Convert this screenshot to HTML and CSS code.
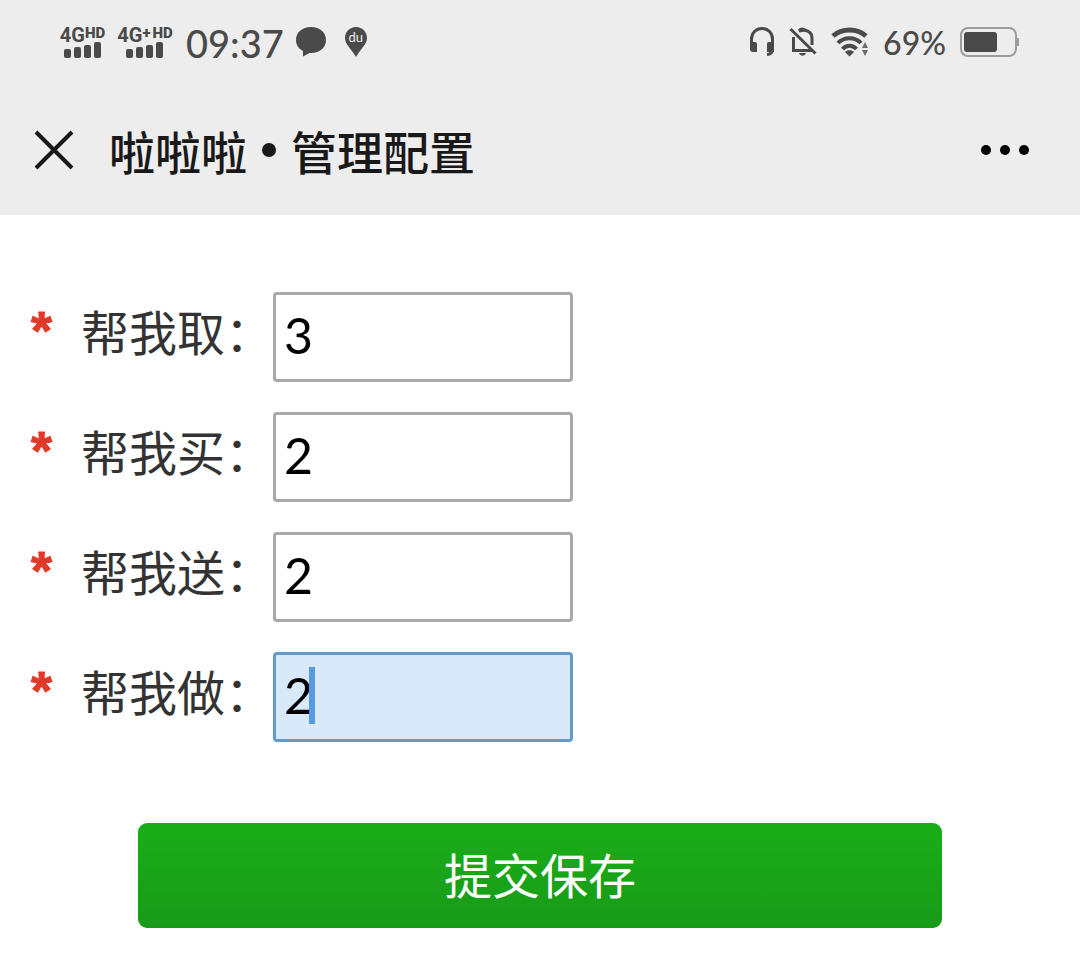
FILE: index.html
```
<!DOCTYPE html>
<html lang="zh-CN">
<head>
  <meta charset="UTF-8">
  <meta name="viewport" content="width=device-width, initial-scale=1.0">
  <title>啦啦啦 • 管理配置</title>
  <link rel="stylesheet" href="styles.css">
</head>
<body>

<header>
  <div class="status-bar">
    <div class="status-left">
      <div class="signal">
        <div class="network">4G<small>HD</small></div>
        <svg width="38" height="16" viewBox="0 0 38 16" fill="#4a4a4a">
          <rect x="0" y="7" width="7" height="9" rx="2"/>
          <rect x="10" y="5" width="7" height="11" rx="2"/>
          <rect x="20" y="3" width="7" height="13" rx="2"/>
          <rect x="30" y="0" width="7" height="16" rx="2"/>
        </svg>
      </div>
      <div class="signal">
        <div class="network">4G<small>+</small><small class="hd">HD</small></div>
        <svg width="38" height="16" viewBox="0 0 38 16" fill="#4a4a4a">
          <rect x="0" y="7" width="7" height="9" rx="2"/>
          <rect x="10" y="5" width="7" height="11" rx="2"/>
          <rect x="20" y="3" width="7" height="13" rx="2"/>
          <rect x="30" y="0" width="7" height="16" rx="2"/>
        </svg>
      </div>
      <div class="clock">09:37</div>
      <svg class="chat-icon" width="32" height="30" viewBox="0 0 32 30" fill="#4a4a4a">
        <path d="M16 0C7 0 1 5.500 1 13C1 18 3.500 21.500 8 24V29.500L14.500 26H16C25 26 31 20.500 31 13S25 0 16 0Z"/>
      </svg>
      <div class="pin">
        <svg width="24" height="32" viewBox="0 0 24 32" fill="#4a4a4a">
          <path d="M12 1C5.500 1 1 6 1 12C1 18 6 21 12 31C18 21 23 18 23 12C23 6 18.500 1 12 1Z"/>
        </svg>
        <span>du</span>
      </div>
    </div>
    <div class="status-right">
      <svg width="26" height="32" viewBox="0 0 26 32" fill="none" stroke="#4a4a4a" stroke-width="3">
        <path d="M2.500 18V13C2.500 7 7 2.500 13 2.500S23.500 7 23.500 13V22C23.500 26 22 28.500 18 28.500"/>
        <path d="M1 16H6Q8 16 8 18V26H4Q1 26 1 23ZM25 16H20Q18 16 18 18V26H25Z" fill="#4a4a4a" stroke="none"/>
      </svg>
      <svg class="bell-icon" width="28" height="32" viewBox="0 0 28 32" fill="none" stroke="#4a4a4a" stroke-width="3">
        <path d="M4.500 11V24.500H23M10 5.500C16 2 23 6 23 12V19"/>
        <path d="M1.500 3L26.500 27.500"/>
        <path d="M9 4C10 .5 16 .5 17 4ZM10 27H17C16 30.500 11 30.500 10 27Z" fill="#4a4a4a" stroke="none"/>
      </svg>
      <svg class="wifi-icon" width="38" height="30" viewBox="0 0 38 30" fill="none" stroke="#4a4a4a" stroke-width="5">
        <path d="M2 9C11 1 26 1 35 9"/>
        <path d="M7 16C13 9.500 24 9.500 30 16" stroke-width="4"/>
        <path d="M11.500 22C15.500 17.500 21.500 17.500 25.500 22" stroke-width="4"/>
        <path d="M14 25C16 22.500 21 22.500 23 25L18.500 29.500Z" fill="#4a4a4a" stroke="none"/>
        <path d="M34 15L37 21H31ZM34 29L37 23H31Z" fill="#6a6a6a" stroke="none"/>
      </svg>
      <div class="battery-level">69%</div>
      <svg class="battery-icon" width="60" height="30" viewBox="0 0 60 30">
        <rect x="1" y="1" width="55" height="28" rx="7" fill="none" stroke="#9c9c9c" stroke-width="2"/>
        <rect x="4" y="5" width="33" height="20" rx="3" fill="#4a4a4a"/>
        <path d="M58 11V19" stroke="#9c9c9c" stroke-width="2"/>
      </svg>
    </div>
  </div>

  <div class="nav-bar">
    <button type="button" class="icon-button" aria-label="关闭">
      <svg width="40" height="40" viewBox="0 0 40 40" stroke="#191919" stroke-width="4">
        <path d="M2 2L38 38M38 2L2 38"/>
      </svg>
    </button>
    <h1>啦啦啦 <span class="dot"></span> 管理配置</h1>
    <button type="button" class="icon-button" aria-label="更多">
      <svg width="50" height="12" viewBox="0 0 50 12" fill="#000">
        <circle cx="6" cy="6" r="5"/>
        <circle cx="25" cy="6" r="5"/>
        <circle cx="44" cy="6" r="5"/>
      </svg>
    </button>
  </div>
</header>

<form>
  <div class="row">
    <span class="required">*</span>
    <label for="fetch">帮我取：</label>
    <div class="field"><input type="text" id="fetch" value="3"></div>
  </div>
  <div class="row">
    <span class="required">*</span>
    <label for="buy">帮我买：</label>
    <div class="field"><input type="text" id="buy" value="2"></div>
  </div>
  <div class="row">
    <span class="required">*</span>
    <label for="send">帮我送：</label>
    <div class="field"><input type="text" id="send" value="2"></div>
  </div>
  <div class="row">
    <span class="required">*</span>
    <label for="do">帮我做：</label>
    <div class="field active"><input type="text" id="do" value="2"></div>
  </div>
  <button type="submit" class="submit">提交保存</button>
</form>

</body>
</html>
```
FILE: styles.css
```
* {
  box-sizing: border-box;
}
body {
  margin: 0;
  background-color: #fff;
  color: #333;
  font-family: "Noto Sans CJK SC", sans-serif;
}
svg {
  display: block;
  flex-shrink: 0;
}
header {
  background-color: #ededed;
}
.status-bar {
  display: flex;
  justify-content: space-between;
  align-items: center;
  height: 84px;
  padding: 0 60px 0 59px;
  color: #4a4a4a;
  font-family: Lato, sans-serif;
}
.status-left,
.status-right {
  display: flex;
  align-items: center;
}
.signal {
  display: flex;
  flex-direction: column;
  align-items: center;
  width: 47px;
  margin-right: 11px;
}
.signal + .signal {
  width: 56px;
  margin-right: 13px;
}
.network {
  display: flex;
  align-items: flex-start;
  height: 15px;
  font-family: Roboto, sans-serif;
  font-size: 20px;
  font-weight: 700;
  line-height: 16px;
}
.network small {
  font-size: 15px;
  font-weight: 900;
  line-height: 12px;
}
.network .hd {
  margin-left: 2px;
}
.clock {
  padding-top: 2px;
  font-size: 38px;
  font-weight: 500;
  line-height: 40px;
}
.chat-icon {
  margin-left: 11px;
}
.pin {
  position: relative;
  margin-left: 17px;
}
.pin span {
  position: absolute;
  top: 4px;
  left: 0;
  width: 100%;
  color: #ededed;
  font-size: 13px;
  line-height: 14px;
  text-align: center;
}
.bell-icon {
  margin-left: 14px;
}
.wifi-icon {
  margin-left: 14px;
}
.battery-level {
  margin-left: 14px;
  padding-top: 2px;
  font-size: 32px;
  font-weight: 500;
  line-height: 40px;
}
.battery-icon {
  margin-left: 14px;
}
.nav-bar {
  display: flex;
  align-items: center;
  height: 131px;
  padding: 0 50px 0 34px;
}
.icon-button {
  padding: 0;
  border: none;
  background: none;
  cursor: pointer;
}
h1 {
  display: flex;
  align-items: center;
  flex: 1;
  gap: 15px;
  margin: 0 0 0 35px;
  color: #191919;
  font-size: 46px;
  font-weight: 500;
  line-height: 60px;
}
.dot {
  width: 14px;
  height: 14px;
  border-radius: 50%;
  background-color: #191919;
}
form {
  display: flex;
  flex-direction: column;
  gap: 30px;
  padding: 77px 30px 28px;
}
.row {
  display: flex;
  align-items: center;
}
.required {
  width: 51px;
  padding: 0 0 14px 1px;
  color: #e23a2a;
  font-family: "Liberation Sans", sans-serif;
  font-size: 54px;
  font-weight: 700;
  line-height: 60px;
  -webkit-text-stroke: 1px #e23a2a;
}
label {
  padding-bottom: 15px;
  font-size: 48px;
  line-height: 72px;
}
.field {
  position: relative;
}
input {
  display: block;
  width: 300px;
  height: 90px;
  padding: 0 8px 4px;
  border: 3px solid #a9a9a9;
  border-radius: 4px;
  background-color: #fff;
  color: #000;
  font-family: Lato, sans-serif;
  font-size: 50px;
  outline: none;
}
.active input {
  border-color: #659aca;
  background-color: #d8e9f9;
}
.active::after {
  content: "";
  position: absolute;
  top: 15px;
  left: 36px;
  width: 6px;
  height: 57px;
  background-color: #559ae2;
}
.submit {
  height: 105px;
  margin: 51px 108px 0;
  padding: 0 0 6px;
  border: none;
  border-radius: 9px;
  background: linear-gradient(#1bae19, #189a18);
  color: #fff;
  font-family: "Noto Sans CJK SC", sans-serif;
  font-size: 48px;
  line-height: 72px;
  cursor: pointer;
}
```
